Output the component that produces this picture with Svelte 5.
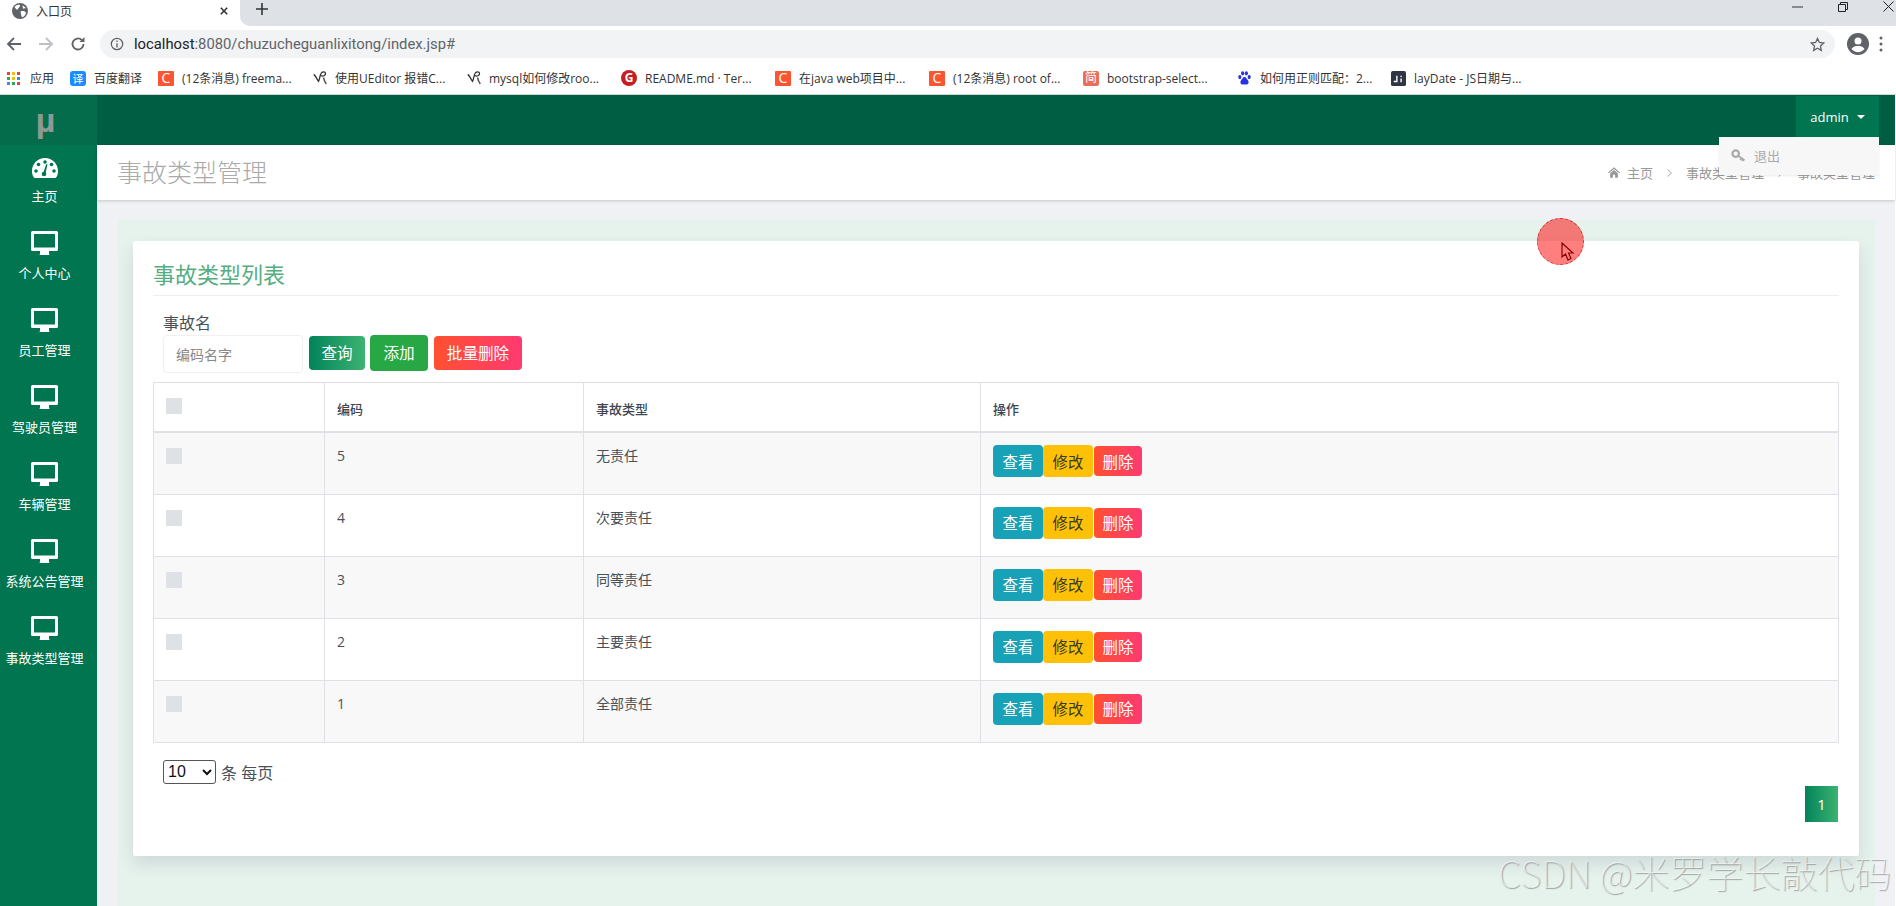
<script>
  const menu = ['个人中心', '员工管理', '驾驶员管理', '车辆管理', '系统公告管理', '事故类型管理'];
  const rows = [
    { id: 5, name: '无责任' },
    { id: 4, name: '次要责任' },
    { id: 3, name: '同等责任' },
    { id: 2, name: '主要责任' },
    { id: 1, name: '全部责任' }
  ];
  const appsGrid = ['#ea4335','#fbbc05','#ea4335','#34a853','#fbbc05','#4285f4','#4285f4','#34a853','#ea4335'];
</script>

{#snippet monitor()}
  <svg class="mon" viewBox="0 0 27 24" width="27" height="24" aria-hidden="true">
    <path fill="#fff" fill-rule="evenodd" d="M1.500 0h24A1.500 1.500 0 0 1 27 1.500v17a1.500 1.500 0 0 1-1.500 1.500H18v2.500l.5 1.500h-10l.5-1.500V20H1.500A1.500 1.500 0 0 1 0 18.500v-17A1.500 1.500 0 0 1 1.500 0zM3 3v13.500h21V3z"/>
  </svg>
{/snippet}

{#snippet chev()}
  <svg class="chev" viewBox="0 0 5 8" width="5" height="8" aria-hidden="true"><path d="M.5.5L4.500 4 .5 7.500" fill="none" stroke="#aaa"/></svg>
{/snippet}

{#snippet quill()}
  <svg class="fav" viewBox="0 0 14 16" width="14" height="16" aria-hidden="true">
    <path fill="none" stroke="#333" stroke-width="1.300" d="M.7 4.500C2.500 5 3.500 9 5.500 11.300 7 9 6.500 6 8 3.500c1-2 4-2.300 4.500-.3.5 2.300-2.800 3.800-4.500 2.300"/>
    <path fill="none" stroke="#555" stroke-width="1.500" d="M10.500 7.500c.5 2.500 1.300 4.500 2.800 6.500"/>
  </svg>
{/snippet}

<div class="root">
  <header class="browser">
    <div class="tabstrip">
      <div class="tab">
        <svg viewBox="0 0 16 16" width="16" height="16" aria-hidden="true">
          <circle cx="8" cy="8" r="8" fill="#5f6368"/>
          <path fill="#fff" d="M2.500 4C4 2 6.500 1.500 8 2c.5 1.500-1.500 2.500-2 4-.5 1.200-2 .5-3.500-2zM8.500 8.500c2-1 5-.5 5.500 1.500-.5 2-2 4-4 4.300-1-1.500-1-4-1.500-5.800zM10.500 2.300l3.500 2.700-3 .7z"/>
        </svg>
        <span class="tabtitle">入口页</span>
        <svg class="tabx" viewBox="0 0 10 10" width="8" height="8" aria-hidden="true"><path d="M1 1l8 8M9 1l-8 8" stroke="#333" stroke-width="2"/></svg>
      </div>
      <div class="striprest">
        <svg class="plus" viewBox="0 0 12 12" width="12" height="12" aria-hidden="true"><path d="M6 0v12M0 6h12" stroke="#333" stroke-width="1.600"/></svg>
        <div class="winctl">
          <svg viewBox="0 0 12 2" width="11" height="2" aria-hidden="true"><path d="M0 1h12" stroke="#222"/></svg>
          <svg viewBox="0 0 10 10" width="10" height="10" aria-hidden="true"><path d="M.5 2.500h7v7h-7zM2.500 2.500v-2h7v7h-2" fill="none" stroke="#222"/></svg>
          <svg viewBox="0 0 11 11" width="11" height="11" aria-hidden="true"><path d="M.5.5l10 10M10.500.5l-10 10" stroke="#222"/></svg>
        </div>
      </div>
    </div>
    <div class="toolbar">
      <svg class="nav" viewBox="0 0 16 16" width="16" height="16" aria-hidden="true"><path d="M15 8H2M8 2L2 8l6 6" fill="none" stroke="#5f6368" stroke-width="1.800"/></svg>
      <svg class="nav" viewBox="0 0 16 16" width="16" height="16" aria-hidden="true"><path d="M1 8h13M8 2l6 6-6 6" fill="none" stroke="#bdc1c6" stroke-width="1.800"/></svg>
      <svg class="nav" viewBox="0 0 16 16" width="16" height="16" aria-hidden="true"><path d="M13.500 8A5.500 5.500 0 1 1 11.800 4" fill="none" stroke="#5f6368" stroke-width="1.800"/><path d="M14.500 1v5h-5z" fill="#5f6368"/></svg>
      <div class="omni">
        <svg viewBox="0 0 16 16" width="14" height="14" aria-hidden="true"><circle cx="8" cy="8" r="6.500" fill="none" stroke="#5f6368" stroke-width="1.400"/><path d="M8 7v5M8 4v1.600" stroke="#5f6368" stroke-width="1.500"/></svg>
        <span class="url"><b>localhost</b>:8080/chuzucheguanlixitong/index.jsp#</span>
        <svg class="star" viewBox="0 0 16 16" width="15" height="15" aria-hidden="true"><path d="M8 1.500l2 4.300 4.700.6-3.500 3.200.9 4.700L8 12l-4.100 2.300.9-4.700L1.300 6.400 6 5.800z" fill="none" stroke="#5f6368" stroke-width="1.400"/></svg>
      </div>
      <svg class="avatar" viewBox="0 0 22 22" width="22" height="22" aria-hidden="true"><circle cx="11" cy="11" r="11" fill="#5f6368"/><circle cx="11" cy="8" r="3.500" fill="#fff"/><path d="M4.500 16c1.500-2.500 4-3 6.500-3s5 .5 6.500 3c-1.500 2-4 3.200-6.500 3.200S6 18 4.500 16z" fill="#fff"/></svg>
      <svg class="kebab" viewBox="0 0 4 16" width="4" height="16" aria-hidden="true"><circle cx="2" cy="2" r="1.500" fill="#5f6368"/><circle cx="2" cy="8" r="1.500" fill="#5f6368"/><circle cx="2" cy="14" r="1.500" fill="#5f6368"/></svg>
    </div>
    <div class="bookmarks">
      <div class="bm bm-apps">
        <span class="grid">{#each appsGrid as c}<i style:background={c}></i>{/each}</span>
        <span>应用</span>
      </div>
      <div class="bm bm-fy"><span class="fav fy">译</span><span>百度翻译</span></div>
      <div class="bm"><span class="fav cs">C</span><span>(12条消息) freema...</span></div>
      <div class="bm">{@render quill()}<span>使用UEditor 报错C...</span></div>
      <div class="bm">{@render quill()}<span>mysql如何修改roo...</span></div>
      <div class="bm"><span class="fav gg">G</span><span>README.md · Ter...</span></div>
      <div class="bm"><span class="fav cs">C</span><span>在java web项目中...</span></div>
      <div class="bm"><span class="fav cs">C</span><span>(12条消息) root of...</span></div>
      <div class="bm"><span class="fav js">简</span><span>bootstrap-select...</span></div>
      <div class="bm">
        <svg class="fav" viewBox="0 0 16 16" width="15" height="16" aria-hidden="true"><g fill="#2932e1"><ellipse cx="3" cy="7" rx="1.700" ry="2.300"/><ellipse cx="6" cy="3" rx="1.700" ry="2.300"/><ellipse cx="10" cy="3" rx="1.700" ry="2.300"/><ellipse cx="13" cy="7" rx="1.700" ry="2.300"/><path d="M8 7c2 0 2 2 4 4 1 2 0 4-2 4H6c-2 0-3-2-2-4 2-2 2-4 4-4z"/></g></svg>
        <span>如何用正则匹配：2...</span>
      </div>
      <div class="bm">
        <svg class="fav" viewBox="0 0 16 16" width="15" height="15" aria-hidden="true"><rect width="16" height="16" rx="2" fill="#2f3542"/><path d="M3 12h4V5H5.500v5.500H3zM10 8h1.500v4H10zM10 5h1.500v1.500H10z" fill="#fff"/></svg>
        <span>layDate - JS日期与...</span>
      </div>
    </div>
  </header>

  <div class="shell">
    <aside class="sidebar">
      <div class="logo">µ</div>
      <div class="mitem">
        <svg class="dash" viewBox="0 0 26 20" width="26" height="20" aria-hidden="true">
          <path fill="#fff" d="M13 0C5.800 0 0 5.800 0 13c0 2.300.5 4.300 1.500 6 .4.700 1 1 1.700 1h19.600c.7 0 1.300-.3 1.700-1 1-1.700 1.500-3.700 1.500-6C26 5.800 20.200 0 13 0z"/>
          <g fill="#00754f"><circle cx="13" cy="4" r="1.800"/><circle cx="6.500" cy="6.500" r="1.800"/><circle cx="19.500" cy="6.500" r="1.800"/><circle cx="4" cy="13" r="1.800"/><circle cx="22" cy="13" r="1.800"/><circle cx="12" cy="16" r="2.300"/><path d="M11 15.500l3.300-9.500 1.200.4L13.200 16.500z"/></g>
        </svg>
        <span>主页</span>
      </div>
      {#each menu as m}
        <div class="mitem">{@render monitor()}<span>{m}</span></div>
      {/each}
    </aside>

    <div class="main">
      <div class="topbar">
        <div class="admin">admin<i class="caret"></i></div>
      </div>
      <div class="titlebar">
        <h1>事故类型管理</h1>
        <nav class="crumbs">
          <svg viewBox="0 0 14 12" width="12" height="11" aria-hidden="true"><path fill="#999" d="M7 0l7 6-1 1-6-5-6 5-1-1zM2.500 7L7 3.200 11.500 7v5H8.300V8.500H5.700V12H2.500z"/></svg>
          <span>主页</span>{@render chev()}<span>事故类型管理</span>{@render chev()}<span>事故类型管理</span>
        </nav>
      </div>

      <div class="content">
        <div class="panel">
          <section class="card">
            <h2>事故类型列表</h2>
            <div class="search">
              <label for="nm">事故名</label>
              <div class="searchrow">
                <input id="nm" placeholder="编码名字" />
                <button class="btn query">查询</button>
                <button class="btn add">添加</button>
                <button class="btn del">批量删除</button>
              </div>
            </div>
            <table>
              <colgroup><col class="c1"/><col class="c2"/><col class="c3"/><col/></colgroup>
              <thead>
                <tr><th><div class="cb"></div></th><th>编码</th><th>事故类型</th><th>操作</th></tr>
              </thead>
              <tbody>
                {#each rows as r}
                  <tr>
                    <td><div class="cb"></div></td>
                    <td>{r.id}</td>
                    <td>{r.name}</td>
                    <td class="ops">
                      <div class="opsrow">
                        <button class="mini view">查看</button>
                        <button class="mini edit">修改</button>
                        <button class="mini rm">删除</button>
                      </div>
                    </td>
                  </tr>
                {/each}
              </tbody>
            </table>
            <div class="pagesize">
              <select><option>10</option></select>
              <span>条 每页</span>
            </div>
            <div class="pager"><span class="pg">1</span></div>
          </section>
        </div>
      </div>
    </div>
  </div>

  <div class="menu-drop">
    <svg viewBox="0 0 16 14" width="15" height="13" aria-hidden="true"><circle cx="5" cy="5" r="3.500" fill="none" stroke="#aaa" stroke-width="2.400"/><path d="M8 7.500l6.500 4.500M11 10l-1 2M13 11.500l-1 1.500" stroke="#aaa" stroke-width="2"/></svg>
    <span>退出</span>
  </div>

  <div class="cursor">
    <svg viewBox="0 0 14 20" width="14" height="20" aria-hidden="true"><path d="M1 1v14l3.500-3 2.500 6 3-1.500-2.500-5.500H12z" fill="none" stroke="#8a0000" stroke-width="1.200"/></svg>
  </div>

  <div class="watermark">CSDN @米罗学长敲代码</div>
</div>

<style>
  :global(body) { margin: 0; overflow: hidden; background: #fff; }
  .root {
    position: relative; width: 1896px; height: 906px; overflow: hidden;
    font-family: "Open Sans", "Noto Sans CJK SC", sans-serif; color: #495057;
  }
  .browser { height: 95px; display: flex; flex-direction: column; background: #fff; }
  .tabstrip { height: 26px; background: #fff; display: flex; }
  .tab {
    width: 240px; height: 26px; background: #fff; box-sizing: border-box; flex: none;
    display: flex; align-items: center; padding: 0 12px 5px 12px; gap: 8px;
  }
  .tabtitle { font-size: 12px; color: #333; flex: 1; }
  .striprest { flex: 1; background: #dee1e6; border-bottom-left-radius: 10px; display: flex; align-items: center; }
  .plus { margin: -8px 0 0 16px; }
  .winctl { margin-left: auto; display: flex; gap: 35px; align-items: center; padding: 0 2px 13px 0; }
  .toolbar { height: 36px; display: flex; align-items: center; padding: 0 0 0 6px; box-sizing: border-box; }
  .nav { margin-right: 16px; flex: none; }
  .nav:nth-child(3) { margin-right: 14px; }
  .omni {
    width: 1735px; height: 28px; border-radius: 14px; background: #f1f3f4;
    display: flex; align-items: center; padding: 0 10px; box-sizing: border-box; gap: 10px;
  }
  .url { font-size: 14.8px; color: #5f6368; flex: 1; font-family: "Roboto", sans-serif; }
  .url b { font-weight: 400; color: #202124; }
  .avatar { margin-left: 12px; flex: none; }
  .kebab { margin-left: 10px; flex: none; }
  .bookmarks { flex: 1; display: flex; align-items: center; padding-left: 7px; font-size: 12px; color: #333; white-space: nowrap; border-bottom: 1px solid #cfd8d4; }
  .bm { width: 154px; flex: none; display: flex; align-items: center; gap: 8px; box-sizing: border-box; }
  .bm-apps { width: 63px; gap: 10px; }
  .bm-fy { width: 88px; }
  .bm:nth-child(3) { width: 155px; }
  .grid { display: grid; grid-template-columns: repeat(3, 3px); gap: 2px; width: 13px; }
  .grid i { display: block; width: 3px; height: 3px; }
  .fav { flex: none; }
  span.fav { width: 16px; height: 15px; display: flex; align-items: center; justify-content: center; color: #fff; font-size: 12px; line-height: 1; }
  .fy { background: #1a8cff; border-radius: 3px; font-size: 11px !important; }
  .cs { background: #fc5531; font-size: 14px !important; border-radius: 1px; }
  .gg { background: #c71d23; border-radius: 50%; font-weight: 700; height: 16px !important; }
  .js { background: #ea6f5a; border-radius: 2px; }

  .shell { display: flex; height: 811px; width: 1895px; }
  .sidebar { width: 97px; flex: none; background: #00754f; }
  .logo {
    height: 50px; background: #056c4b; color: #8d9a93; font-size: 34px; font-weight: 700;
    display: flex; align-items: center; justify-content: center; font-family: "Liberation Sans", sans-serif; padding-right: 6px; box-sizing: border-box;
  }
  .mitem {
    height: 77px; box-sizing: border-box; border-bottom: 1px solid #05704d; padding: 10px 8px 0 0;
    display: flex; flex-direction: column; align-items: center; color: #fff; font-size: 13px; white-space: nowrap;
  }
  .mitem span { margin-top: 9px; line-height: 18px; }
  .mon { display: block; margin-top: -1px; }
  .dash { display: block; margin: 3px 0 0; }
  .dash + span { margin-top: 9px; }

  .main { flex: 1; display: flex; flex-direction: column; min-width: 0; }
  .topbar { height: 50px; background: #005e43; display: flex; justify-content: flex-end; flex: none; }
  .admin {
    width: 83px; height: 42px; margin: 1px 16px 0 0; background: #00754f; color: #fff; font-size: 13px;
    display: flex; align-items: center; justify-content: center; gap: 8px;
  }
  .caret { width: 0; height: 0; border: 4px solid transparent; border-top-color: #fff; border-bottom: 0; }
  .titlebar {
    height: 55px; background: #fff; flex: none; display: flex; align-items: center; justify-content: space-between;
    box-shadow: 0 1px 3px rgba(0,0,0,.18); position: relative; padding: 0 20px; box-sizing: border-box;
  }
  h1 { margin: 0 0 1px; font-size: 25px; font-weight: 300; color: #aaa; line-height: 1; }
  .crumbs { display: flex; align-items: center; font-size: 13px; color: #999; }
  .crumbs span { margin-left: 7px; }
  .crumbs .chev { margin: 0 7px 0 14px; }
  .crumbs .chev + span { margin-left: 7px; }
  .content { flex: 1; background: #eff1f5; padding: 20px 20px 0 21px; min-height: 0; overflow: hidden; }
  .panel { background: #e6f2ec; height: 100%; padding: 21px 16px 0 15px; box-sizing: border-box; }
  .card {
    height: 615px; background: #fff; padding: 0 20px; box-sizing: border-box; border-radius: 2px;
    box-shadow: 0 8px 16px rgba(60,80,100,.14);
  }
  h2 {
    margin: 0; height: 55px; box-sizing: border-box; padding-top: 16px; font-size: 22px; font-weight: 400; line-height: 34px;
    color: #55ad80; border-bottom: 1px solid #eceff1;
  }
  .search { padding: 16px 0 0 10px; height: 86px; box-sizing: border-box; }
  label { display: block; font-size: 16px; line-height: 22px; color: #495057; height: 23px; }
  .searchrow { display: flex; align-items: center; }
  input {
    width: 140px; height: 38px; box-sizing: border-box; border: 1px solid #f0f0f0; border-radius: 4px; padding: 0 12px; margin-right: 6px;
    font: 14px "Open Sans", "Noto Sans CJK SC", sans-serif; color: #495057; background: #fff; outline: none;
  }
  input::placeholder { color: #888; opacity: 1; }
  .btn { border: 0; color: #fff; font: 15.6px "Open Sans", "Noto Sans CJK SC", sans-serif; border-radius: 4px; padding: 0; height: 34px; margin-right: 5px; margin-top: -3px; }
  .query { width: 56px; background: linear-gradient(90deg, #03835a, #3cb371); }
  .add { width: 58px; height: 36px; background: #28a745; margin-right: 6px; }
  .del { width: 88px; background: linear-gradient(90deg, #ff5030, #ff3a70); }

  table { width: 1686px; border-collapse: collapse; table-layout: fixed; font-size: 14px; color: #495057; }
  .c1 { width: 171px; } .c2 { width: 259px; } .c3 { width: 397px; }
  th, td { border: 1px solid #dee2e6; padding: 11px 12px 12px; text-align: left; vertical-align: top; line-height: 24px; }
  th { box-sizing: border-box; font-size: 13px; font-weight: 500; padding-top: 14px; padding-bottom: 10px; border-bottom-width: 2px; color: #3f4650; }
  td { height: 62px; box-sizing: border-box; }
  tbody tr:nth-child(odd) { background: #f8f8f9; }
  .cb { width: 16px; height: 16px; background: #dee2e6; margin-top: 4px; }
  th .cb { margin-top: 1px; }
  .ops { padding-top: 12px; }
  .opsrow { display: flex; align-items: center; }
  .mini { border: 0; height: 32px; width: 50px; padding: 0; border-radius: 4px; font: 15.4px "Open Sans", "Noto Sans CJK SC", sans-serif; color: #fff; }
  .view { background: #17a2b8; }
  .edit { background: #ffc107; color: #3a3a2a; }
  .rm { width: 48px; height: 30px; margin-left: 1px; background: linear-gradient(90deg, #ff5030, #ff3a70); }
  .pagesize { display: flex; align-items: center; gap: 5px; padding: 17px 0 0 10px; font-size: 16px; color: #495057; }
  select { width: 53px; height: 24px; font: 16px "Liberation Sans", sans-serif; background: #fff; color: #111; border: 1px solid #555; border-radius: 3px; }
  .pager { display: flex; justify-content: flex-end; margin-top: 2px; padding-right: 1px; }
  .pg { width: 33px; height: 36px; display: flex; align-items: center; justify-content: center; color: #fff; font-size: 15px; background: linear-gradient(90deg, #03835a, #3cb371); }

  .menu-drop {
    position: absolute; left: 1719px; top: 137px; width: 160px; height: 38px; box-sizing: border-box; background: #f7f7f7;
    display: flex; align-items: center; gap: 8px; padding: 0 0 2px 12px; font-size: 13px; color: #aaa; box-shadow: 0 1px 2px rgba(0,0,0,.08);
  }
  .cursor {
    position: absolute; left: 1537px; top: 218px; width: 47px; height: 47px; box-sizing: border-box; border-radius: 50%;
    background: rgba(255, 0, 0, .5); border: 1px dashed rgba(170,0,0,.6);
  }
  .cursor svg { position: absolute; left: 23px; top: 23px; }
  .watermark {
    position: absolute; left: 1498px; top: 850px; font: 100 37px "Noto Sans CJK SC", "Liberation Sans", sans-serif; line-height: 44px; white-space: nowrap;
    color: rgba(255,255,255,.55); text-shadow: 1px 1px 1px rgba(120,120,120,.65);
  }
</style>
